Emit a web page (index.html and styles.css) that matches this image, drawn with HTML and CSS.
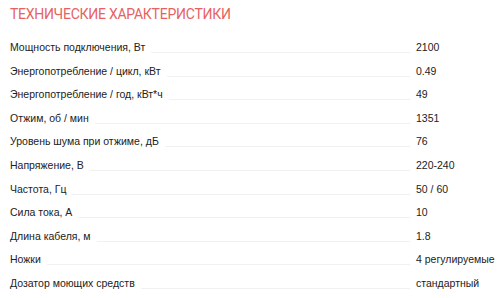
FILE: index.html
```html
<!DOCTYPE html>
<html lang="ru">
<head>
<meta charset="utf-8">
<link rel="stylesheet" href="styles.css">
</head>
<body>
<div class="specs">
  <h2 class="title">Технические характеристики</h2>
  <div class="list">
    <div class="row"><span class="label">Мощность подключения, Вт</span><span class="leader"></span><span class="value">2100</span></div>
    <div class="row"><span class="label">Энергопотребление / цикл, кВт</span><span class="leader"></span><span class="value">0.49</span></div>
    <div class="row"><span class="label">Энергопотребление / год, кВт*ч</span><span class="leader"></span><span class="value">49</span></div>
    <div class="row"><span class="label">Отжим, об / мин</span><span class="leader"></span><span class="value">1351</span></div>
    <div class="row"><span class="label">Уровень шума при отжиме, дБ</span><span class="leader"></span><span class="value">76</span></div>
    <div class="row"><span class="label">Напряжение, В</span><span class="leader"></span><span class="value">220-240</span></div>
    <div class="row"><span class="label">Частота, Гц</span><span class="leader"></span><span class="value">50 / 60</span></div>
    <div class="row"><span class="label">Сила тока, А</span><span class="leader"></span><span class="value">10</span></div>
    <div class="row"><span class="label">Длина кабеля, м</span><span class="leader"></span><span class="value">1.8</span></div>
    <div class="row"><span class="label">Ножки</span><span class="leader"></span><span class="value">4 регулируемые</span></div>
    <div class="row"><span class="label">Дозатор моющих средств</span><span class="leader"></span><span class="value">стандартный</span></div>
  </div>
</div>
</body>
</html>
```
FILE: styles.css
```css
html, body {
  margin: 0;
  padding: 0;
  background: #fff;
}
body {
  font-family: "Liberation Sans", Arial, sans-serif;
  color: #222;
  overflow: hidden;
}
.specs {
  padding: 4px 0 0 10px;
}
.title {
  margin: 0 0 11px 0;
  font-family: Roboto, "Liberation Sans", sans-serif;
  font-size: 14px;
  font-weight: normal;
  text-transform: uppercase;
  color: #e66262;
  line-height: 21px;
  letter-spacing: -0.25px;
}
.list {
  display: flex;
  flex-direction: column;
}
.row {
  display: flex;
  align-items: baseline;
  height: 23.6px;
  line-height: 23.6px;
  font-size: 10.5px;
}
.leader {
  flex: 1;
  border-bottom: 1px solid #f1f1f1;
  margin: 0 6px 0 6px;
  position: relative;
  top: 2px;
}
.value {
  width: 84px;
  flex: none;
  white-space: nowrap;
}
```
